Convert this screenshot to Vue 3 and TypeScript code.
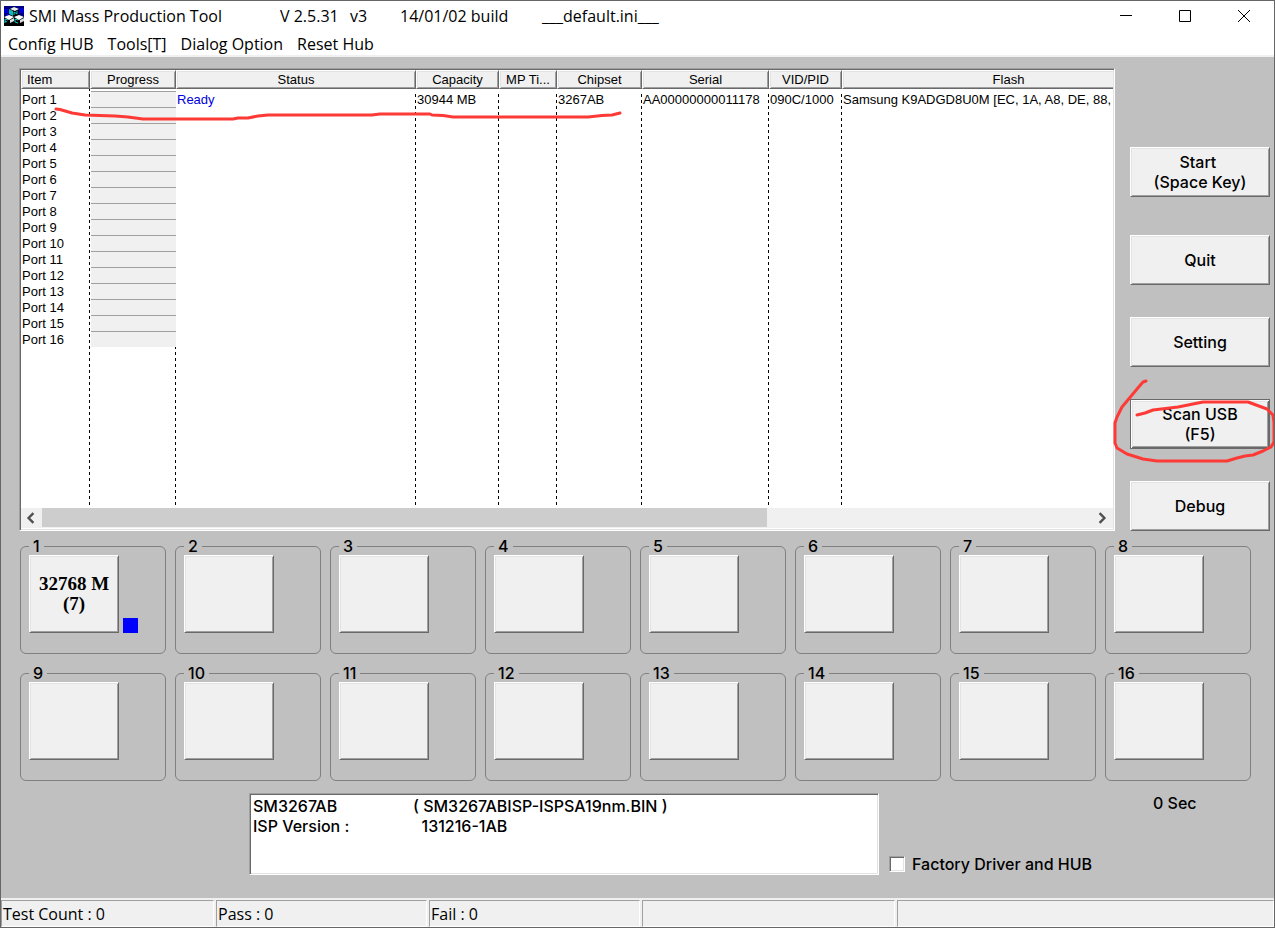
<script setup lang="ts">
import { ref } from 'vue'

interface Port {
  name: string
  status: string
  capacity: string
  time: string
  chipset: string
  serial: string
  vid: string
  flash: string
}

const menus = ['Config HUB', 'Tools[T]', 'Dialog Option', 'Reset Hub']
const headers = ['Item', 'Progress', 'Status', 'Capacity', 'MP Ti...', 'Chipset', 'Serial', 'VID/PID', 'Flash']
const colClasses = ['c-item', 'c-progress', 'c-status', 'c-capacity', 'c-time', 'c-chipset', 'c-serial', 'c-vid', 'c-flash']

const ports: Port[] = Array.from({ length: 16 }, (_, i) => ({
  name: `Port ${i + 1}`,
  status: '',
  capacity: '',
  time: '',
  chipset: '',
  serial: '',
  vid: '',
  flash: '',
}))
Object.assign(ports[0], {
  status: 'Ready',
  capacity: '30944 MB',
  chipset: '3267AB',
  serial: 'AA00000000011178',
  vid: '090C/1000',
  flash: 'Samsung K9ADGD8U0M [EC, 1A, A8, DE, 88,',
})

const slots = Array.from({ length: 16 }, (_, i) => i + 1)
const info = ref('SM3267AB\t( SM3267ABISP-ISPSA19nm.BIN )\nISP Version :\t  131216-1AB')
const factory = ref(false)
const statusCells = ['Test Count : 0', 'Pass : 0', 'Fail : 0', '', '']
</script>

<template>
  <div class="window">
    <header class="titlebar">
      <svg class="logo" viewBox="0 0 20 20" aria-hidden="true">
        <rect width="20" height="20" fill="#000080" />
        <path d="M0 3h4v4H0zM15 2h5v5h-5zM2 8h3v2H2z" fill="#0000d0" />
        <path d="M0 14l6 3 4-2 5 3 5-4v6H0z" fill="#000" />
        <path d="M5 3l5-2 5 2v6l-5 2-5-2z" fill="#000" />
        <path d="M6 3l4-2 5 2-4 2z" fill="#e8f0f0" />
        <path d="M5 3l4 2v5L5 8z" fill="#10b8b8" />
        <path d="M10 9V6l3 2V5" stroke="#10c8c8" fill="none" />
        <path d="M0 11l5-2 5 2v6l-5 2-5-2z" fill="#000" />
        <path d="M0 11l5-2 5 2-5 3z" fill="#fff" />
        <path d="M1 13l3 1M1 13v4M1 15l2 1" stroke="#10c8c8" fill="none" />
        <path d="M6 14l4-2v3l-4 2z" fill="#ddd" />
        <path d="M10 11l5-2 5 2v6l-5 2-5-2z" fill="#000" />
        <path d="M10 11l5-2 5 2-5 3z" fill="#fff" />
        <path d="M14 14l-3-1v3l3 1" stroke="#10c8c8" fill="none" />
        <path d="M16 14l4-2v3l-4 2z" fill="#ddd" />
      </svg>
      <h1 class="title">
        <span class="t-name">SMI Mass Production Tool</span>
        <span class="t-version">V 2.5.31</span>
        <span class="t-rev">v3</span>
        <span class="t-build">14/01/02 build</span>
        <span>___default.ini___</span>
      </h1>
      <div class="caption">
        <button type="button" aria-label="Minimize">
          <svg viewBox="0 0 14 14"><path d="M1 6.5h12" /></svg>
        </button>
        <button type="button" aria-label="Maximize">
          <svg viewBox="0 0 14 14"><path d="M1.5 1.5h11v11h-11z" /></svg>
        </button>
        <button type="button" aria-label="Close">
          <svg viewBox="0 0 14 14"><path d="M1 1l12 12M13 1L1 13" /></svg>
        </button>
      </div>
    </header>

    <nav class="menubar">
      <button v-for="m in menus" :key="m" type="button">{{ m }}</button>
    </nav>

    <main class="body">
      <section class="upper">
        <div class="list sunken">
          <div class="viewport">
            <table>
              <colgroup>
                <col v-for="c in colClasses" :key="c" :class="c" />
              </colgroup>
              <thead>
                <tr>
                  <th v-for="h in headers" :key="h" scope="col">{{ h }}</th>
                </tr>
              </thead>
              <tbody>
                <tr class="spacer"><td colspan="9"></td></tr>
                <tr v-for="p in ports" :key="p.name">
                  <td>{{ p.name }}</td>
                  <td class="progress"><div></div></td>
                  <td class="state">{{ p.status }}</td>
                  <td>{{ p.capacity }}</td>
                  <td>{{ p.time }}</td>
                  <td>{{ p.chipset }}</td>
                  <td>{{ p.serial }}</td>
                  <td>{{ p.vid }}</td>
                  <td>{{ p.flash }}</td>
                </tr>
                <tr class="filler"><td v-for="c in colClasses" :key="c"></td></tr>
              </tbody>
            </table>
          </div>
          <div class="scrollbar">
            <button type="button" aria-label="Scroll left">
              <svg viewBox="0 0 10 10"><path d="M7 1L3 5l4 4" /></svg>
            </button>
            <div class="track"><div class="thumb"></div></div>
            <button type="button" aria-label="Scroll right">
              <svg viewBox="0 0 10 10"><path d="M3 1l4 4-4 4" /></svg>
            </button>
          </div>
          <svg class="mark underline" viewBox="53 103 570 20" aria-hidden="true">
            <path d="M56 109L60 109.500L72 113L85 115L115 116L128 117L143 119H233L238 118H248L258 116L268 115H372L380 114H430L432 115L443 115.500L453 117H588L602 115.500L612 115L620 113" />
          </svg>
        </div>

        <div class="actions">
          <button type="button" class="raised start">Start&nbsp;<br />(Space Key)</button>
          <button type="button" class="raised">Quit</button>
          <button type="button" class="raised">Setting</button>
          <div class="scan">
            <button type="button" class="raised default">Scan USB<br />(F5)</button>
            <svg class="mark circle" viewBox="1112 377 164 90" aria-hidden="true">
              <path d="M1146 381L1143 382L1137 389L1122 407L1117 417L1115 423V443L1117 448L1127 454L1143 459L1157 461H1227L1237 458L1245 456L1253 455L1263 451L1271 447L1274 442V422L1273 415L1267 409L1248 402H1203L1178 407L1153 410L1145 413L1137 415" />
            </svg>
          </div>
          <button type="button" class="raised">Debug</button>
        </div>
      </section>

      <section class="slots">
        <fieldset v-for="n in slots" :key="n">
          <legend>{{ n }}</legend>
          <button type="button" class="raised slot" :aria-label="`Slot ${n}`">
            <template v-if="n === 1">32768 M<br />(7)</template>
          </button>
          <i v-if="n === 1" class="led"></i>
        </fieldset>
      </section>

      <section class="lower">
        <textarea v-model="info" class="sunken memo" aria-label="ISP information" readonly spellcheck="false"></textarea>
        <label class="check">
          <input v-model="factory" type="checkbox" class="sunken" />
          Factory Driver and HUB
        </label>
        <div class="elapsed">0 Sec</div>
      </section>
    </main>

    <footer class="statusbar">
      <div v-for="(s, i) in statusCells" :key="i">{{ s }}</div>
    </footer>
  </div>
</template>

<style>
body {
  margin: 0;
  background: #c0c0c0;
}
</style>

<style scoped>
* {
  box-sizing: border-box;
}

.window {
  display: flex;
  flex-direction: column;
  min-height: 100vh;
  border: 1px solid #666;
  background: #c0c0c0;
  color: #000;
  font: 500 16px/20px Inter, "Liberation Sans", Arial, sans-serif;
  overflow: hidden;
}

button {
  padding: 0;
  border: 0;
  background: none;
  color: inherit;
  font: inherit;
}

.titlebar {
  display: flex;
  align-items: center;
  height: 30px;
  padding: 0 1px 0 3px;
  background: #fff;
}

.titlebar,
.menubar,
.statusbar {
  font-family: "Open Sans", "Noto Sans", sans-serif;
  font-weight: 400;
}

.logo {
  width: 20px;
  height: 20px;
}

.title {
  display: flex;
  flex: 1;
  margin: 0 0 0 5px;
  font-size: 16px;
  font-weight: 400;
  line-height: 20px;
  white-space: nowrap;
}

.t-name {
  width: 251px;
}

.t-version {
  width: 70px;
}

.t-rev {
  width: 50px;
}

.t-build {
  width: 142px;
}

.caption {
  display: flex;
}

.caption button {
  display: grid;
  place-items: center;
  width: 59px;
  height: 30px;
}

.caption svg {
  width: 14px;
  height: 14px;
  fill: none;
  stroke: #000;
  stroke-width: 1;
}

.menubar {
  display: flex;
  gap: 14px;
  height: 26px;
  padding: 2px 7px 0;
  border-bottom: 2px solid #f0f0f0;
  background: #fff;
}

.body {
  flex: 1;
  padding: 11px 4px 20px 18px;
}

.sunken {
  border: 1px solid;
  border-color: #a0a0a0 #fff #fff #a0a0a0;
  box-shadow: inset 1px 1px #696969, inset -1px -1px #e3e3e3;
  background: #fff;
}

.raised {
  border: 1px solid;
  border-color: #fff #696969 #696969 #fff;
  box-shadow: inset 1px 1px #e3e3e3, inset -1px -1px #a0a0a0;
  background: #f0f0f0;
}

.upper {
  display: flex;
  gap: 15px;
}

.list {
  position: relative;
  display: flex;
  flex: 1;
  flex-direction: column;
  min-width: 0;
  padding: 1px;
}

.viewport {
  height: 438px;
  overflow: hidden;
}

table {
  width: 1154px;
  min-width: 100%;
  height: 438px;
  table-layout: fixed;
  border-collapse: separate;
  border-spacing: 0;
  font: 400 13px/16px "Liberation Sans", Arial, sans-serif;
}

.c-item { width: 69px; }
.c-progress { width: 86px; }
.c-status { width: 240px; }
.c-capacity { width: 83px; }
.c-time { width: 58px; }
.c-chipset { width: 85px; }
.c-serial { width: 127px; }
.c-vid { width: 73px; }

col:not(:last-child) {
  background: repeating-linear-gradient(#000 0 3px, transparent 3px 6px) right top / 1px 100% no-repeat;
}

th {
  height: 19px;
  padding: 0;
  border: 1px solid;
  border-color: #fff #696969 #696969 #fff;
  box-shadow: inset 1px 1px #e3e3e3, inset -1px -1px #a0a0a0;
  background: #f0f0f0;
  font-weight: 400;
  text-align: center;
}

th:first-child {
  padding-left: 5px;
  text-align: left;
}

td {
  height: 16px;
  padding: 1px 0 0 1px;
  line-height: 15px;
  vertical-align: bottom;
  white-space: nowrap;
}

.spacer td {
  height: 2px;
  padding: 0;
}

.filler td {
  height: auto;
}

td.progress {
  padding: 0 0 0 1px;
}

.progress div {
  height: 16px;
  border-top: 1px solid #a0a0a0;
  background: #f0f0f0;
}

.state {
  color: #0000e0;
}

.scrollbar {
  display: flex;
  height: 20px;
  background: #f0f0f0;
}

.scrollbar button {
  display: grid;
  place-items: center;
  width: 21px;
  padding-right: 2px;
}

.scrollbar svg {
  width: 12px;
  height: 12px;
  fill: none;
  stroke: #505050;
  stroke-width: 2;
}

.track {
  flex: 1;
}

.thumb {
  width: 69%;
  height: 19px;
  background: #cdcdcd;
}

.mark {
  position: absolute;
  fill: none;
  stroke: #fe3a36;
  stroke-width: 3;
  stroke-linecap: round;
  stroke-linejoin: round;
  pointer-events: none;
}

.underline {
  left: 33px;
  top: 34px;
  width: 570px;
  height: 20px;
}

.circle {
  left: -18px;
  top: -22px;
  width: 164px;
  height: 90px;
}

.actions {
  display: flex;
  flex-direction: column;
  gap: 32px;
  width: 140px;
  padding-top: 79px;
}

.actions .raised {
  width: 140px;
  height: 50px;
}

.start {
  margin-bottom: 6px;
}

.scan {
  position: relative;
  height: 50px;
}

.actions .default {
  border-color: #696969;
  box-shadow: inset 1px 1px #fff, inset -1px -1px #696969, inset 2px 2px #e3e3e3, inset -2px -2px #a0a0a0;
}

.slots {
  display: grid;
  grid-template-columns: repeat(8, minmax(0, 1fr));
  gap: 11px 9px;
  padding: 7px 19px 0 1px;
}

fieldset {
  display: flex;
  align-items: flex-end;
  gap: 4px;
  min-width: 0;
  margin: 0;
  padding: 1px 8px 20px;
  border: 1px solid #808080;
  border-radius: 6px;
}

legend {
  padding: 0 4px;
  line-height: 16px;
}

.slot {
  width: 90px;
  height: 78px;
  font: bold 19px/20px "Liberation Serif", "Times New Roman", serif;
}

.led {
  width: 15px;
  height: 15px;
  background: #00f;
}

.lower {
  display: grid;
  grid-template-columns: 230fr 630fr 274fr 117fr;
  padding-top: 12px;
}

.memo {
  grid-column: 2;
  height: 82px;
  margin: 0;
  padding: 2px 3px;
  color: inherit;
  font: inherit;
  tab-size: 160px;
  white-space: pre;
  resize: none;
  outline: 0;
  overflow: hidden;
}

.check {
  display: flex;
  gap: 7px;
  align-items: center;
  align-self: end;
  padding: 0 0 1px 10px;
  white-space: nowrap;
}

.check input {
  width: 16px;
  height: 16px;
  margin: 0;
  appearance: none;
}

.check input:checked {
  background: #000;
}

.statusbar {
  display: grid;
  grid-template-columns: 213fr 211fr 211fr 253fr 377fr;
  gap: 2px;
  height: 29px;
  padding: 2px 0 0;
  background: #f0f0f0;
}

.statusbar div {
  padding: 3px 1px 0;
  border: 1px solid;
  border-color: #a0a0a0 #fff #fff #a0a0a0;
}
</style>
